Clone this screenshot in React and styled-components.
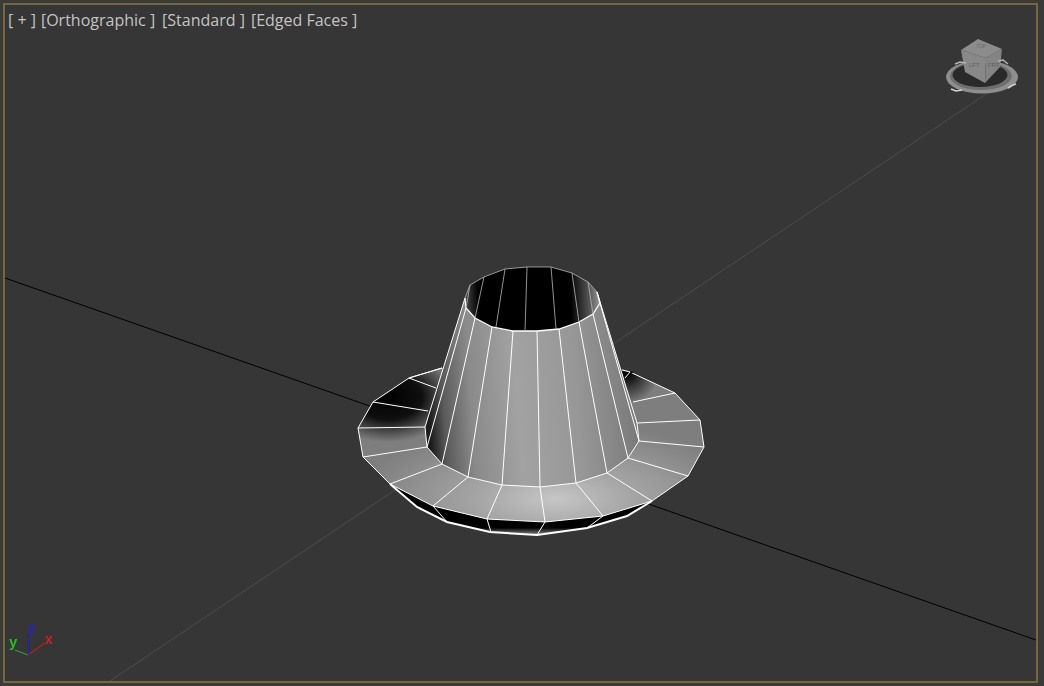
import React from "react";
import styled, { createGlobalStyle } from "styled-components";

const Global = createGlobalStyle`
  html, body { margin: 0; padding: 0; background: #3a3a38; }
  body { width: 1044px; height: 686px; overflow: hidden; }
`;

const Frame = styled.div`
  box-sizing: border-box;
  width: 1044px;
  height: 686px;
  padding: 3px 6px 3px 3px;
`;

const Viewport = styled.main`
  position: relative;
  box-sizing: border-box;
  width: 100%;
  height: 100%;
  border: 2px solid #75683a;
  background: #363636;
  overflow: hidden;
`;

const Scene = styled.svg`
  display: block;
  width: 100%;
  height: 100%;
`;

const Labels = styled.nav`
  position: absolute;
  top: 5px;
  left: 3px;
  display: flex;
  font-family: "Open Sans", "Noto Sans", sans-serif;
  font-size: 16px;
  line-height: 21px;
  color: #c4c4c4;
  white-space: pre;
`;

const Label = styled.span`
  margin-right: ${(p) => p.$gap}px;
`;

const Letter = styled.text`
  font-family: "Liberation Sans", sans-serif;
  font-size: ${(p) => p.$size}px;
  font-weight: ${(p) => p.$weight || 400};
  fill: ${(p) => p.$color};
`;

const rimBack = [[465,298],[470,285],[484,277],[505,269],[527,267],[551,267],[572,273],[588,282],[597,292]];
const rimFront = [[465,298],[466,308],[475,318],[492,327],[513,331],[537,331],[559,329],[579,322],[593,314],[600,303],[597,292]];
const inner = [[[470,285],[466,308]],[[484,277],[475,318]],[[505,269],[496,327]],[[527,267],[525,331]],[[551,267],[556,329]],[[572,273],[579,322]],[[588,282],[593,314]]];
const coneBase = [[425,427],[427,447],[442,464],[468,477],[502,485],[540,487],[576,483],[607,473],[628,458],[639,441],[637,423]];
const brimOuter = [[358,428],[363,457],[390,484],[433,506],[487,519],[545,522],[603,516],[652,501],[688,476],[704,447],[700,420],[675,393],[630,372],[622,370],[442,368],[409,378],[373,402]];
const under = [[390,484],[433,506],[487,519],[545,522],[603,516],[652,501],[627,516],[587,528],[537,535],[490,532],[447,522],[417,507]];

const pts = (a) => a.map((p) => p.join(",")).join(" ");

function Hat() {
  const conePoly = [...rimFront, [637,423], ...[...coneBase].reverse().slice(1)];
  return (
    <g>
      <defs>
        <radialGradient id="brimLight" gradientUnits="userSpaceOnUse" cx="555" cy="497" r="200" gradientTransform="translate(0 310) scale(1 .38)">
          <stop offset="0" stopColor="#c6c6c6" />
          <stop offset=".4" stopColor="#a4a4a4" />
          <stop offset="1" stopColor="#7e7e7e" />
        </radialGradient>
        <radialGradient id="brimDark" gradientUnits="userSpaceOnUse" cx="388" cy="398" r="68" gradientTransform="translate(0 130) scale(1 .67)">
          <stop offset="0" stopColor="#000" />
          <stop offset=".5" stopColor="#000" stopOpacity=".88" />
          <stop offset="1" stopColor="#000" stopOpacity="0" />
        </radialGradient>
        <radialGradient id="brimDarkR" gradientUnits="userSpaceOnUse" cx="628" cy="374" r="30">
          <stop offset="0" stopColor="#000" />
          <stop offset="1" stopColor="#000" stopOpacity="0" />
        </radialGradient>
        <linearGradient id="cone" gradientUnits="userSpaceOnUse" x1="428" y1="400" x2="640" y2="385">
          <stop offset="0" stopColor="#1c1c1c" />
          <stop offset=".07" stopColor="#5a5a5a" />
          <stop offset=".2" stopColor="#8a8a8a" />
          <stop offset=".42" stopColor="#a2a2a2" />
          <stop offset=".7" stopColor="#979797" />
          <stop offset="1" stopColor="#787878" />
        </linearGradient>
        <linearGradient id="throat" gradientUnits="userSpaceOnUse" x1="465" y1="300" x2="600" y2="295">
          <stop offset="0" stopColor="#4a4a4a" />
          <stop offset=".1" stopColor="#000" />
          <stop offset=".78" stopColor="#000" />
          <stop offset=".92" stopColor="#555" />
          <stop offset="1" stopColor="#9a9a9a" />
        </linearGradient>
        <linearGradient id="under" gradientUnits="userSpaceOnUse" x1="0" y1="516" x2="0" y2="535">
          <stop offset="0" stopColor="#000" />
          <stop offset=".62" stopColor="#000" />
          <stop offset="1" stopColor="#8c8c8c" />
        </linearGradient>
      </defs>

      <polygon points={pts(under)} fill="url(#under)" />
      <polygon points={pts(brimOuter)} fill="url(#brimLight)" />
      <polygon points={pts(brimOuter)} fill="url(#brimDark)" />
      <polygon points={pts(brimOuter)} fill="url(#brimDarkR)" />

      <g fill="none" stroke="#fff" strokeWidth="1">
        <polyline points="409,378 442,368" />
        <polyline points="622,370 630,372 675,393 700,420 704,447 688,476 652,501" />
        <polyline points="442,368 409,378 373,402 358,428 363,457 390,484" />
        <polyline points="390,484 433,506 487,519 545,522 603,516 652,501" />
        <line x1="373" y1="402" x2="428" y2="411" />
        <line x1="409" y1="378" x2="436" y2="388" />
        <line x1="358" y1="428" x2="425" y2="427" />
        <line x1="363" y1="457" x2="427" y2="447" />
        <line x1="390" y1="484" x2="442" y2="464" />
        <line x1="433" y1="506" x2="468" y2="477" />
        <line x1="487" y1="519" x2="502" y2="485" />
        <line x1="545" y1="522" x2="540" y2="487" />
        <line x1="603" y1="516" x2="576" y2="483" />
        <line x1="652" y1="501" x2="607" y2="473" />
        <line x1="688" y1="476" x2="628" y2="458" />
        <line x1="704" y1="447" x2="639" y2="441" />
        <line x1="700" y1="420" x2="637" y2="423" />
        <line x1="675" y1="393" x2="633" y2="402" />
        <polygon points="622,370 634,372 625,377" fill="#000" stroke="none" />
        <polyline points="622,370 630,372 625,378" />
        <line x1="433" y1="506" x2="447" y2="522" />
        <line x1="487" y1="519" x2="491" y2="532" />
        <line x1="545" y1="522" x2="537" y2="535" />
        <line x1="603" y1="516" x2="587" y2="528" />
      </g>
      <polyline points="390,484 417,507 447,522 490,532 537,535 587,528 627,516 652,501" fill="none" stroke="#fff" strokeWidth="2" />

      <polygon points={pts(conePoly)} fill="url(#cone)" />
      <polygon points={pts([...rimBack, ...[...rimFront].reverse().slice(1, -1)])} fill="url(#throat)" />

      <g fill="none" stroke="#fff" strokeWidth="1">
        <polyline points={pts(coneBase)} />
        <polyline points={pts(rimFront)} strokeWidth="1.3" />
        {rimFront.slice(0, 10).map((p, i) => (
          <line key={i} x1={p[0]} y1={p[1]} x2={coneBase[i][0]} y2={coneBase[i][1]} />
        ))}
        <line x1="597" y1="292" x2="637" y2="423" />
      </g>
      <g fill="none" stroke="#b8b8b8" strokeWidth=".8">
        <polyline points={pts(rimBack)} />
        {inner.map(([a, b], i) => (
          <line key={i} x1={a[0]} y1={a[1]} x2={b[0]} y2={b[1]} />
        ))}
      </g>
    </g>
  );
}

function ViewCube() {
  return (
    <g>
      <defs>
        <filter id="soft" x="-10%" y="-10%" width="120%" height="120%">
          <feGaussianBlur stdDeviation=".6" />
        </filter>
      </defs>
      <g filter="url(#soft)">
        <ellipse cx="982" cy="77" rx="36" ry="16.5" fill="#8e8e8e" />
        <ellipse cx="981" cy="76" rx="31" ry="14" fill="#6e6e6e" />
        <ellipse cx="980" cy="75" rx="27.5" ry="12" fill="#2a2a2a" />
        <polygon points="978,39 1002,49 986,58 961,50" fill="#8c8c8c" />
        <polygon points="961,50 986,58 985,83 965,72" fill="#888888" />
        <polygon points="986,58 1002,49 1000,67 985,83" fill="#848484" />
        <polyline points="955,64 960,62 966,63" fill="none" stroke="#b5b5b5" strokeWidth="1.4" />
        <polyline points="998,61 1003,60 1008,64" fill="none" stroke="#b5b5b5" strokeWidth="1.4" />
        <polyline points="951,89 956,91 962,90" fill="none" stroke="#d0d0d0" strokeWidth="1.6" />
        <polyline points="1008,88 1013,85 1016,84" fill="none" stroke="#d0d0d0" strokeWidth="1.6" />
        <Letter x="969" y="67" $size={6} $color="#5e5e5e">LFT</Letter>
        <Letter x="988" y="67" $size={6} $color="#5e5e5e">FRT</Letter>
        <Letter x="976" y="48" $size={5} $color="#6a6a6a">TOP</Letter>
      </g>
    </g>
  );
}

function Tripod() {
  return (
    <g filter="url(#soft)">
      <line x1="28" y1="655" x2="15" y2="650" stroke="#3aa83a" strokeWidth="1" />
      <line x1="28" y1="655" x2="45" y2="643" stroke="#b02020" strokeWidth="1.2" />
      <line x1="28.5" y1="655" x2="28.5" y2="634" stroke="#2020c8" strokeWidth="1.2" />
      <Letter x="9" y="647" $size={15} $weight={700} $color="#25c025">y</Letter>
      <Letter x="28" y="633" $size={14} $weight={700} $color="#2020d8">z</Letter>
      <Letter x="45" y="644" $size={14} $weight={700} $color="#d02020">x</Letter>
    </g>
  );
}

export default function App() {
  return (
    <>
      <Global />
      <Frame>
        <Viewport>
          <Scene viewBox="5 5 1031 676" preserveAspectRatio="none">
            <line x1="5" y1="278" x2="1036" y2="640" stroke="#000" strokeWidth="1" />
            <line x1="110" y1="681" x2="1010" y2="78" stroke="#4c4c4c" strokeWidth="1" />
            <Hat />
            <ViewCube />
            <Tripod />
          </Scene>
          <Labels>
            <Label $gap={5}>[ + ]</Label>
            <Label $gap={7}>[Orthographic ]</Label>
            <Label $gap={6}>[Standard ]</Label>
            <Label $gap={0}>[Edged Faces ]</Label>
          </Labels>
        </Viewport>
      </Frame>
    </>
  );
}
